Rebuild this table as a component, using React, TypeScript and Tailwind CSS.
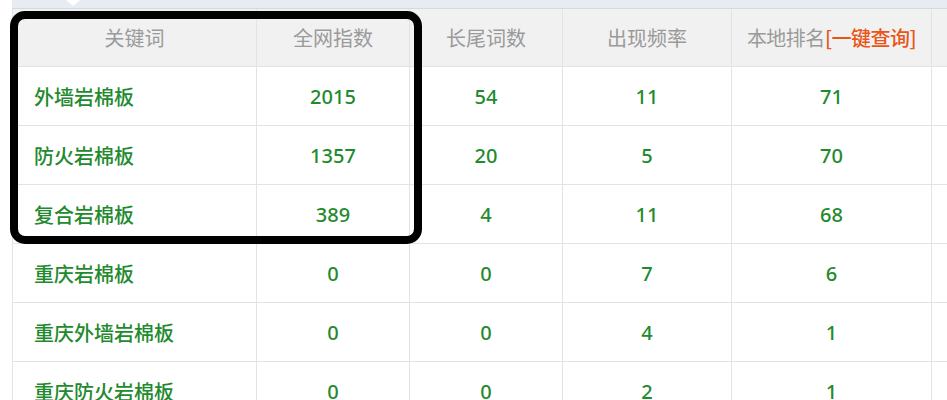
import React from "react";

const cjk = { fontFamily: '"Noto Sans CJK SC", "Noto Sans", sans-serif' };
const num = { fontFamily: '"Noto Sans", "Open Sans", sans-serif' };

const rows = [
	["外墙岩棉板", "2015", "54", "11", "71"],
	["防火岩棉板", "1357", "20", "5", "70"],
	["复合岩棉板", "389", "4", "11", "68"],
	["重庆岩棉板", "0", "0", "7", "6"],
	["重庆外墙岩棉板", "0", "0", "4", "1"],
	["重庆防火岩棉板", "0", "0", "2", "1"],
];

const cols = "grid grid-cols-[244px_153px_153px_169px_200px_1fr]";

export default function App() {
	return (
		<div className="relative w-[947px] h-[400px] overflow-hidden bg-white" style={cjk}>
			{/* tab strip */}
			<div className="relative ml-[12px] h-[9px] bg-[#e7ebf2] border-b border-[#d3d8e2]">
				<div className="absolute left-[54px] top-0 w-0 h-0 border-l-[7px] border-r-[7px] border-t-[6px] border-l-transparent border-r-transparent border-t-white" />
			</div>

			<div className="ml-[12px] border-l border-[#e3e3e3]">
				<div className={`${cols} h-[58px] bg-[#f1f1f1] border-b border-[#e3e3e3] text-[20px] text-[#9a9a9a]`}>
					<div className="flex items-center justify-center border-r border-[#e3e3e3]">关键词</div>
					<div className="flex items-center justify-center border-r border-[#e3e3e3]">全网指数</div>
					<div className="flex items-center justify-center border-r border-[#e3e3e3]">长尾词数</div>
					<div className="flex items-center justify-center border-r border-[#e3e3e3]">出现频率</div>
					<div className="flex items-center justify-center border-r border-[#e3e3e3] tracking-[-0.5px]">
						本地排名<span className="font-medium text-[#e8561a]">[一键查询]</span>
					</div>
					<div />
				</div>

				{rows.map((r) => (
					<div key={r[0]} className={`${cols} h-[59px] border-b border-[#e3e3e3] text-[#1f8a2e]`}>
						<div className="flex items-center pl-[21px] pt-[2px] text-[20px] font-medium border-r border-[#e3e3e3]">
							{r[0]}
						</div>
						{r.slice(1).map((v, i) => (
							<div
								key={i}
								className="flex items-center justify-center pt-[2px] text-[20px] font-medium border-r border-[#e3e3e3]"
								style={num}
							>
								{v}
							</div>
						))}
						<div />
					</div>
				))}
			</div>

			{/* highlight frame */}
			<div className="absolute left-[10px] top-[11px] w-[412px] h-[233px] border-[8px] border-black rounded-[15px]" />
		</div>
	);
}
